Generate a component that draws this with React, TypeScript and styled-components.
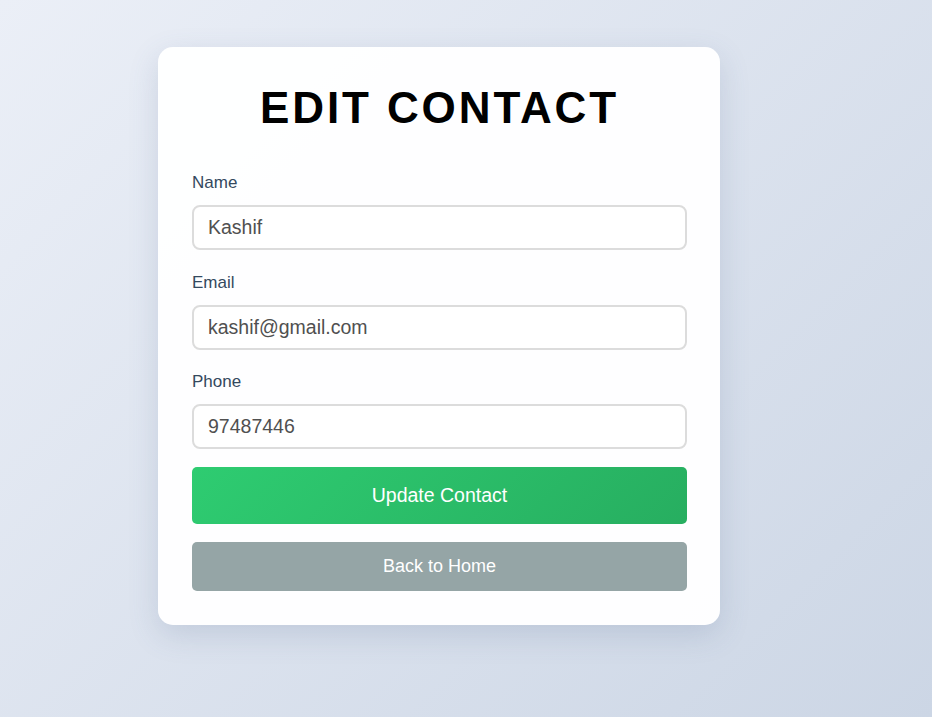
import React from "react";
import styled, { createGlobalStyle } from "styled-components";

const GlobalStyle = createGlobalStyle`
  html, body { margin: 0; padding: 0; }
  body {
    min-height: 717px;
    font-family: "Liberation Sans", Arial, sans-serif;
    background: linear-gradient(135deg, #ebeff7 0%, #ccd6e5 100%);
  }
  * { box-sizing: border-box; }
`;

const Page = styled.div`
  min-height: 717px;
  padding: 47px 0 0 158px;
`;

const Card = styled.div`
  width: 562px;
  background: rgba(255, 255, 255, 0.96);
  border-radius: 15px;
  box-shadow: 0 10px 30px rgba(80, 100, 140, 0.18);
  padding: 34px 33px 34px 34px;
`;

const Title = styled.h1`
  margin: 0 0 38px 0;
  text-align: center;
  font-size: 44px;
  line-height: 54px;
  font-weight: 700;
  letter-spacing: 2.9px;
  color: #000;
`;

const Field = styled.div`
  display: flex;
  flex-direction: column;
  margin-bottom: 22.5px;
`;

const Label = styled.label`
  font-size: 17px;
  line-height: 20px;
  color: #34495e;
  margin-bottom: 12px;
`;

const Input = styled.input`
  width: 495px;
  height: 45px;
  border: 2px solid #dcdcdc;
  border-radius: 8px;
  padding: 0 14px;
  font-family: "Liberation Sans", Arial, sans-serif;
  font-size: 19.5px;
  color: #505050;
  background: #fff;
  outline: none;
`;

const Actions = styled.div`
  display: flex;
  flex-direction: column;
  gap: 18px;
  margin-top: -4.5px;
`;

const Button = styled.button<{ $variant: "primary" | "secondary" }>`
  display: block;
  width: 495px;
  height: ${(p) => (p.$variant === "primary" ? "57px" : "49px")};
  border: none;
  border-radius: 5px;
  color: #fff;
  font-family: "Liberation Sans", Arial, sans-serif;
  font-size: ${(p) => (p.$variant === "primary" ? "19.5px" : "18px")};
  background: ${(p) =>
    p.$variant === "primary"
      ? "linear-gradient(135deg, #2ecc71 0%, #27ae60 100%)"
      : "#95a5a6"};
  cursor: pointer;
`;

export default function App() {
  return (
    <>
      <GlobalStyle />
      <Page>
        <Card>
          <Title>EDIT CONTACT</Title>
          <Field>
            <Label>Name</Label>
            <Input defaultValue="Kashif" />
          </Field>
          <Field>
            <Label>Email</Label>
            <Input defaultValue="kashif@gmail.com" />
          </Field>
          <Field>
            <Label>Phone</Label>
            <Input defaultValue="97487446" />
          </Field>
          <Actions>
            <Button $variant="primary">Update Contact</Button>
            <Button $variant="secondary">Back to Home</Button>
          </Actions>
        </Card>
      </Page>
    </>
  );
}
